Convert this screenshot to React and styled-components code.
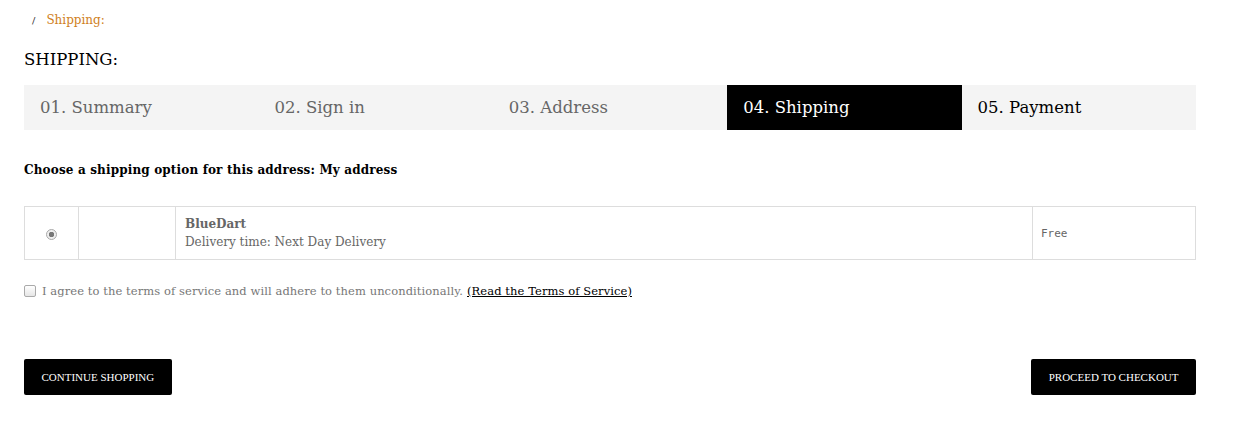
import styled, { createGlobalStyle } from "styled-components";

const GlobalStyle = createGlobalStyle`
    body {
        margin: 0;
        background: #fff;
        font-family: "DejaVu Serif", "Liberation Serif", serif;
        color: #333;
    }
`;

const STEPS = [
    { label: "01. Summary", state: "done" },
    { label: "02. Sign in", state: "done" },
    { label: "03. Address", state: "done" },
    { label: "04. Shipping", state: "current" },
    { label: "05. Payment", state: "todo" },
];

function App() {
    return (
        <Page>
            <GlobalStyle />
            <Breadcrumb>
                <Separator>/</Separator>
                <Crumb>Shipping:</Crumb>
            </Breadcrumb>
            <Title>SHIPPING:</Title>
            <Steps>
                {STEPS.map((step) => (
                    <Step key={step.label} state={step.state}>{step.label}</Step>
                ))}
            </Steps>
            <Question>Choose a shipping option for this address: My address</Question>
            <Options>
                <tbody>
                    <tr>
                        <RadioCell><Radio /></RadioCell>
                        <LogoCell />
                        <InfoCell>
                            <Carrier>BlueDart</Carrier>
                            <Delay>Delivery time:&nbsp;Next Day Delivery</Delay>
                        </InfoCell>
                        <PriceCell>Free</PriceCell>
                    </tr>
                </tbody>
            </Options>
            <Terms>
                <Checkbox />
                <span>I agree to the terms of service and will adhere to them unconditionally.</span>
                <TermsLink>(Read the Terms of Service)</TermsLink>
            </Terms>
            <Actions>
                <Button>Continue shopping</Button>
                <Button>Proceed to checkout</Button>
            </Actions>
        </Page>
    );
}

const Page = styled.div`
    width: 1172px;
    padding: 0 24px;
`;

const Breadcrumb = styled.div`
    display: flex;
    align-items: center;
    height: 40px;
    padding-left: 8px;
    font-size: 12px;
`;

const Separator = styled.span`
    color: #333;
    margin-right: 11px;
    font-size: 10px;
`;

const Crumb = styled.span`
    color: #d0801c;
`;

const Title = styled.h1`
    margin: 9px 0 14px;
    font-size: 16.5px;
    font-weight: normal;
    color: #000;
    line-height: 22px;
`;

const Steps = styled.div`
    display: grid;
    grid-template-columns: repeat(5, 1fr);
    background: #f4f4f4;
    height: 45px;
`;

const Step = styled.div`
    display: flex;
    align-items: center;
    padding-left: 16px;
    font-size: 16.5px;
    color: ${(p) => (p.state === "done" ? "#666" : p.state === "current" ? "#fff" : "#000")};
    background: ${(p) => (p.state === "current" ? "#000" : "transparent")};
`;

const Question = styled.p`
    margin: 33px 0 29px;
    font-size: 12px;
    font-weight: bold;
    color: #000;
    letter-spacing: 0.15px;
`;

const Options = styled.table`
    width: 100%;
    border-collapse: collapse;
    border: 1px solid #ddd;
    td {
        border: 1px solid #ddd;
        height: 50px;
        vertical-align: middle;
    }
`;

const RadioCell = styled.td`
    width: 51px;
    text-align: center;
`;

const Radio = styled.span`
    display: inline-block;
    width: 9px;
    height: 9px;
    border-radius: 50%;
    border: 1px solid #aaa;
    background: radial-gradient(circle, #777 0 2.5px, #eee 3px);
    vertical-align: middle;
`;

const LogoCell = styled.td`
    width: 94px;
`;

const InfoCell = styled.td`
    padding-left: 9px;
    font-size: 12px;
    color: #666;
    line-height: 18px;
`;

const Carrier = styled.div`
    font-weight: bold;
`;

const Delay = styled.div``;

const PriceCell = styled.td`
    width: 153px;
    padding-left: 8px;
    font-size: 11px;
    color: #666;
    font-family: "DejaVu Sans Mono", "Liberation Mono", monospace;
`;

const Terms = styled.div`
    display: flex;
    align-items: center;
    margin-top: 24px;
    font-size: 11.5px;
    color: #777;
    letter-spacing: 0.08px;
`;

const Checkbox = styled.span`
    display: inline-block;
    width: 10px;
    height: 10px;
    border: 1px solid #aaa;
    border-radius: 2px;
    background: linear-gradient(#fff, #e6e6e6);
    margin-right: 6px;
`;

const TermsLink = styled.a`
    margin-left: 4px;
    color: #000;
    text-decoration: underline;
`;

const Actions = styled.div`
    display: flex;
    justify-content: space-between;
    margin-top: 61px;
`;

const Button = styled.button`
    height: 36px;
    padding: 0 17.5px;
    border: 0;
    border-radius: 2px;
    background: #000;
    color: #fff;
    font-family: "Liberation Serif", serif;
    font-size: 11px;
    text-transform: uppercase;
    cursor: pointer;
`;

export default App;
